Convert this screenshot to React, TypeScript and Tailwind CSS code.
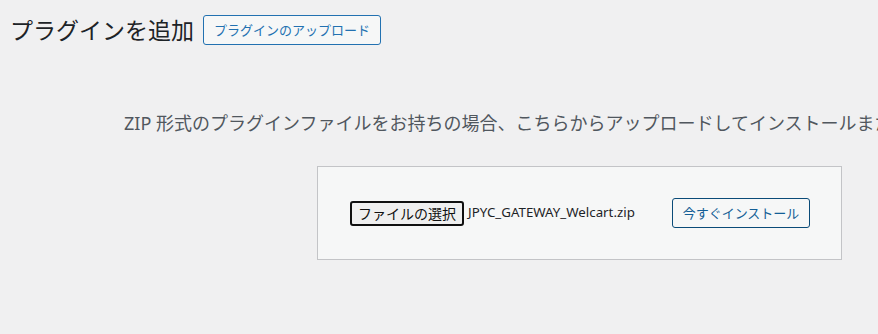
import React from 'react';

const font = { fontFamily: '"Noto Sans", "Noto Sans CJK JP", sans-serif' };

const App: React.FC = () => {
  return (
    <div className="w-[878px] h-[334px] overflow-hidden bg-[#f0f0f1] text-[#1d2327]" style={font}>
      <div className="flex items-center pt-[15px] pl-[10px]">
        <h1 className="text-[23px] leading-[30px] font-normal text-[#1d2327] mr-[9px]">プラグインを追加</h1>
        <button className="h-[30px] px-[10px] text-[13px] leading-[28px] text-[#2271b1] border border-[#2271b1] bg-[#f6f7f7] rounded-[3px] whitespace-nowrap">
          プラグインのアップロード
        </button>
      </div>

      <p className="mt-[65px] pl-[124px] text-[18px] leading-[27px] text-[#50575e] whitespace-nowrap">
        ZIP 形式のプラグインファイルをお持ちの場合、こちらからアップロードしてインストールまたは更新できます。
      </p>

      <div className="mt-[29px] ml-[317px] w-[525px] h-[94px] border border-[#c3c4c7] bg-[#f6f7f7] flex items-center pl-[32px] pr-[31px]">
        <button className="h-[25px] px-[6px] text-[14px] leading-[21px] text-[#101010] bg-[#efefef] border-2 border-[#101010] rounded-[3px] whitespace-nowrap">
          ファイルの選択
        </button>
        <span className="ml-[4px] text-[13.3px] text-[#1d2327] whitespace-nowrap">JPYC_GATEWAY_Welcart.zip</span>
        <button className="ml-auto h-[30px] w-[138px] text-[13px] leading-[28px] text-[#135e96] border border-[#0a4b78] bg-[#f6f7f7] rounded-[3px] whitespace-nowrap">
          今すぐインストール
        </button>
      </div>
    </div>
  );
};

export default App;
